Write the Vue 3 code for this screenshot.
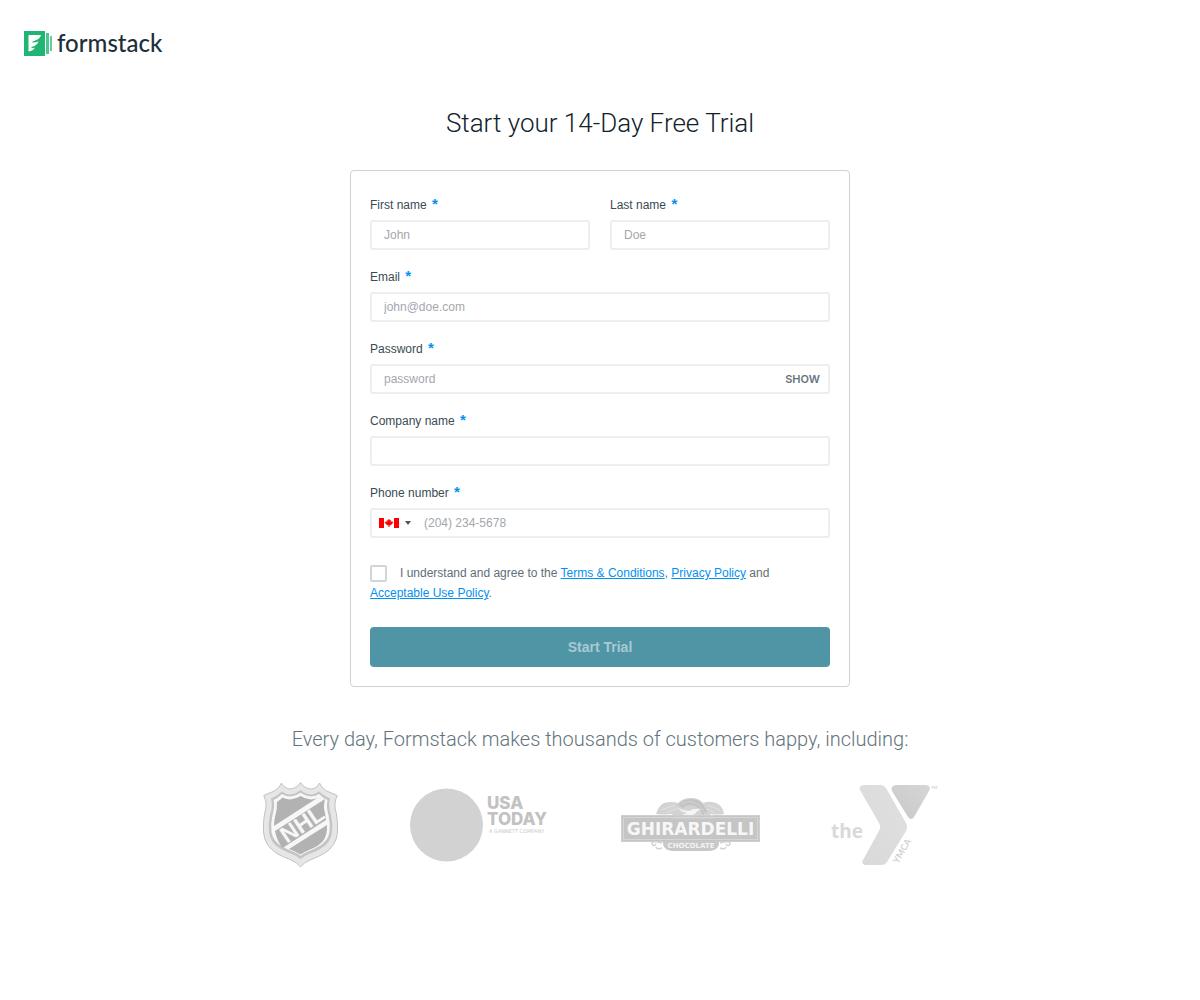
<template>
  <div class="page">
    <header class="header">
      <a href="#" class="brand" aria-label="formstack">
        <svg class="brand-mark" width="29" height="25" viewBox="0 0 29 25" aria-hidden="true">
          <rect x="0" y="0" width="21" height="25" fill="#21b573" />
          <path d="M4.500 4H17C16 7.500 13.500 9 8.500 10.500V11.500Q12 11.500 14.500 10.500C13.500 13.500 11 15 7.500 16V17Q9.500 17 11 16.500C10 19 7.500 20 4.500 20.500Z" fill="#fff" />
          <rect x="22" y="2" width="3" height="21" fill="#4fc690" />
          <rect x="26" y="5" width="2" height="15" fill="#63cc9c" />
        </svg>
        <span class="brand-name">formstack</span>
      </a>
    </header>

    <main>
      <h1>Start your 14-Day Free Trial</h1>

      <form class="card" @submit.prevent>
        <div class="row">
          <div v-for="field in nameFields" :key="field.id" class="field">
            <label :for="field.id">{{ field.label }} <span class="req">*</span></label>
            <input :id="field.id" v-model="form[field.id]" class="control" type="text" :placeholder="field.placeholder">
          </div>
        </div>

        <div class="field">
          <label for="email">Email <span class="req">*</span></label>
          <input id="email" v-model="form.email" class="control" type="email" placeholder="john@doe.com">
        </div>

        <div class="field">
          <label for="password">Password <span class="req">*</span></label>
          <div class="control group">
            <input id="password" v-model="form.password" :type="showPassword ? 'text' : 'password'" placeholder="password">
            <button type="button" class="show" @click="showPassword = !showPassword">{{ showPassword ? "HIDE" : "SHOW" }}</button>
          </div>
        </div>

        <div class="field">
          <label for="company">Company name <span class="req">*</span></label>
          <input id="company" v-model="form.company" class="control" type="text">
        </div>

        <div class="field">
          <label for="phone">Phone number <span class="req">*</span></label>
          <div class="control group">
            <div class="country">
              <svg width="20" height="10" viewBox="0 0 20 10" aria-hidden="true">
                <rect width="20" height="10" fill="#fff" />
                <path d="M0 0H5V10H0ZM15 0H20V10H15Z" fill="#f00" />
                <path d="M10 1L11 2.6L11.9 2.2L11.6 4.2L12.6 3.4L14 4L13.4 5.4L11.4 7.2H10.3V9H9.7V7.2H8.6L6.6 5.4L6 4L7.4 3.4L8.4 4.2L8.1 2.2L9 2.6Z" fill="#f00" stroke="#f00" stroke-width="0.300" />
              </svg>
              <span class="caret"></span>
              <select v-model="form.country" aria-label="Country">
                <option value="ca">Canada</option>
                <option value="us">United States</option>
              </select>
            </div>
            <input id="phone" v-model="form.phone" type="tel" placeholder="(204) 234-5678">
          </div>
        </div>

        <div class="terms">
          <input id="agree" v-model="form.agree" type="checkbox">
          <label for="agree">I understand and agree to the</label> <a href="#">Terms &amp; Conditions</a>, <a href="#">Privacy Policy</a> and <a href="#">Acceptable Use Policy</a>.
        </div>

        <button type="submit" class="submit" :disabled="!form.agree">Start Trial</button>
      </form>

      <h2>Every day, Formstack makes thousands of customers happy, including:</h2>

      <div class="customers">
        <svg width="75" height="86" viewBox="0 0 75 86" role="img" aria-label="NHL">
          <path d="M37.500 0.500Q34 6.500 27 7Q21 6.500 18.500 1Q15 8 9 10Q5 11.500 0.800 13.500Q5 22 1.500 32Q0 40 0.500 50Q1.500 64 14 71.500Q19 74.500 27 77.500Q34 80 37.500 85Q41 80 48 77.500Q56 74.500 61 71.500Q73.500 64 74.500 50Q75 40 73.500 32Q70 22 74.200 13.500Q70 11.500 66 10Q60 8 56.500 1Q54 6.500 48 7Q41 6.500 37.500 0.500Z" fill="#e6e6e6" stroke="#c2c2c2" stroke-width="1" />
          <path d="M37.500 8Q33 12 27 12.500Q22 12 19 9.500Q14 14 8 16.500Q10 24 7 33Q5 42 6 50Q7 61 18 67Q23 70 29 72Q34 74 37.500 77Q41 74 46 72Q52 70 57 67Q68 61 69 50Q70 42 68 33Q65 24 67 16.500Q61 14 56 9.500Q53 12 48 12.500Q42 12 37.500 8Z" fill="#c4c4c4" />
          <path d="M37.500 10.500Q33 14 27 14.500Q22 14 19 12Q15 16 10.500 18Q12 25 9.500 33Q7.500 42 8.500 50Q9.500 59 19.500 64.500Q24 67.500 30 69.500Q35 71.500 37.500 74Q40 71.500 45 69.500Q51 67.500 55.500 64.500Q65.500 59 66.500 50Q67.500 42 65.500 33Q63 25 64.500 18Q60 16 56 12Q53 14 48 14.500Q42 14 37.500 10.500Z" fill="#f7f7f7" />
          <path d="M37.500 14Q33 17 27 17.500Q22 17 19.500 15.500Q17 18 14 20Q14.500 27 12 35Q11 39 11 44L55 15.500Q53 17 48 17.500Q42 17 37.500 14Z" fill="#b2b2b2" />
          <path d="M12 49L62 17Q60 25 62 31L63 38L19.500 66Q13.500 58 12 49Z" fill="#b2b2b2" />
          <text x="39" y="50" class="nhl" transform="rotate(-34 39 42)" text-anchor="middle">NHL</text>
          <path d="M64 43L26 67Q32 69 37.500 72.500Q42 69.500 47 67.500Q56 64 60 59Q64.500 53 64 43Z" fill="#b2b2b2" />
        </svg>

        <svg width="139" height="74" viewBox="0 0 139 74" role="img" aria-label="USA Today">
          <circle cx="36.500" cy="37" r="36.500" fill="#d2d2d2" />
          <text x="77" y="21" class="usa">USA</text>
          <text x="77" y="37" class="usa">TODAY</text>
          <text x="79" y="45" class="gannett">A GANNETT COMPANY</text>
        </svg>

        <svg width="139" height="54" viewBox="0 0 139 54" role="img" aria-label="Ghirardelli Chocolate">
          <path d="M35 16Q37 8 43 5Q50 3 57 5Q62 0 70 0Q78 0 82 5Q90 2 97 6Q102 9 103 16Q96 17 90 16L84 20H58L50 16Q42 17 35 16Z" fill="#d3d3d3" />
          <path d="M57 7Q62 1 70 1Q81 1 86 14L82 17Q78 8 70 7Q64 7 62 10Z" fill="#c3c3c3" />
          <path d="M60 7Q70 -1 80 9Q83 12 84 16" fill="none" stroke="#d3d3d3" stroke-width="1" />
          <path d="M40 12L54 7M45 15L57 10M99 12L87 7M94 15L86 11" fill="none" stroke="#e2e2e2" stroke-width="1" />
          <path d="M57 10Q62 13 68 13Q73 10 81 11Q76 12 74 16Q68 19 61 17L66 15Q60 14 57 10Z" fill="#f5f5f5" />
          <rect x="0.500" y="17.500" width="138" height="26" fill="#c5c5c5" stroke="#cfcfcf" />
          <path d="M50 20Q56 15 69 18Q80 20 92 18V21H50Z" fill="#cbcbcb" />
          <rect x="2.500" y="19.500" width="134" height="22" fill="none" stroke="#d6d6d6" />
          <text x="69.500" y="37" class="ghirardelli" text-anchor="middle">GHIRARDELLI</text>
          <path d="M42 43H98Q99 52 89 53H51Q41 52 42 43Z" fill="#c8c8c8" />
          <text x="70" y="50" class="chocolate" text-anchor="middle">CHOCOLATE</text>
          <path d="M41 45Q30 42 31 46Q33 49 35 46M41 50Q36 52 35 49M99 45Q110 42 109 46Q107 49 105 46M99 50Q104 52 105 49" fill="none" stroke="#d3d3d3" stroke-width="1.500" />
        </svg>

        <svg width="105" height="82" viewBox="0 0 105 82" role="img" aria-label="the YMCA">
          <defs>
            <linearGradient id="y-left" x1="0" y1="1" x2="1" y2="0">
              <stop offset="0" stop-color="#d9d9d9" />
              <stop offset="1" stop-color="#e0e0e0" />
            </linearGradient>
            <linearGradient id="y-right" x1="0" y1="1" x2="1" y2="0">
              <stop offset="0" stop-color="#c8c8c8" />
              <stop offset="1" stop-color="#d6d6d6" />
            </linearGradient>
          </defs>
          <path d="M32 1H48Q52 1 54 4L74 39Q76 43 74 47L55 78Q53 81 49 81H33Q29 80 31 76L48 45Q49 42 47 39L28 6Q26 2 32 1Z" fill="url(#y-left)" />
          <path d="M64 1H94Q100 2 97 7L82 33Q79 37 76 33L60 7Q58 2 64 1Z" fill="url(#y-right)" />
          <text x="-1" y="54" class="the">the</text>
          <text x="66" y="80" class="ymca" transform="rotate(-60 66 80)">YMCA</text>
          <text x="99" y="5" class="tm">TM</text>
        </svg>
      </div>
    </main>
  </div>
</template>

<script setup>
import { reactive, ref } from "vue";

const nameFields = [
  { id: "firstName", label: "First name", placeholder: "John" },
  { id: "lastName", label: "Last name", placeholder: "Doe" }
];

const form = reactive({
  firstName: "",
  lastName: "",
  email: "",
  password: "",
  company: "",
  country: "ca",
  phone: "",
  agree: false
});

const showPassword = ref(false);
</script>

<style>
body {
  margin: 0;
  background: #fff;
}
</style>

<style scoped>
.page {
  font-family: "Liberation Sans", Arial, sans-serif;
  font-size: 12px;
  line-height: 20px;
  color: #3b4a54;
  padding-bottom: 40px;
}

.header {
  display: flex;
  padding: 28px 24px 0;
}

.brand {
  display: flex;
  align-items: center;
  gap: 4px;
  height: 30px;
  color: #1f2f38;
  text-decoration: none;
}

.brand-name {
  font-family: Lato, sans-serif;
  font-size: 24px;
  font-weight: 500;
  line-height: 30px;
}

main {
  display: flex;
  flex-direction: column;
  align-items: center;
  padding: 0 20px;
}

h1, h2 {
  margin: 0;
  font-family: Roboto, sans-serif;
  font-weight: 300;
  text-align: center;
}

h1 {
  padding: 45px 0 27px;
  font-size: 26px;
  line-height: 40px;
  color: #10222c;
}

h2 {
  padding: 37px 0 28px;
  font-size: 20px;
  line-height: 30px;
  color: #63747d;
}

.card {
  display: flex;
  flex-direction: column;
  gap: 17px;
  box-sizing: border-box;
  width: 100%;
  max-width: 500px;
  padding: 24px 19px 19px;
  border: 1px solid #cfd2d5;
  border-radius: 4px;
}

.row {
  display: grid;
  grid-template-columns: 1fr 1fr;
  gap: 20px;
}

.field label {
  display: block;
  margin-bottom: 5px;
}

.req {
  margin-left: 2px;
  font-size: 15px;
  font-weight: bold;
  line-height: 16px;
  color: #0391f0;
}

input, button {
  font-family: inherit;
}

.control {
  display: block;
  box-sizing: border-box;
  width: 100%;
  height: 30px;
  padding: 0 12px;
  border: 2px solid #eeeeee;
  border-radius: 3px;
  background: #fff;
  font-size: 12px;
  color: #3b4a54;
}

.control::placeholder, .group input::placeholder {
  color: #a3a7ad;
  opacity: 1;
}

.group {
  display: flex;
  align-items: center;
  padding: 0 8px 0 7px;
}

.group input {
  flex: 1;
  min-width: 0;
  padding: 0 5px;
  border: 0;
  outline: 0;
  background: none;
  font-size: 12px;
  color: inherit;
}

.show {
  padding: 0;
  border: 0;
  background: none;
  font-family: Inter, sans-serif;
  font-size: 11px;
  font-weight: 600;
  color: #66757e;
  cursor: pointer;
}

.country {
  position: relative;
  display: flex;
  align-items: center;
  gap: 6px;
  margin-right: 8px;
}

.country select {
  position: absolute;
  inset: 0;
  width: 100%;
  opacity: 0;
}

.caret {
  border: 3px solid transparent;
  border-top: 4px solid #555;
  border-bottom: 0;
}

.terms {
  margin-top: 8px;
  color: #5f6e77;
}

.terms input {
  appearance: none;
  box-sizing: border-box;
  width: 17px;
  height: 17px;
  margin: 0 13px 0 0;
  border: 2px solid #cfd5d9;
  border-radius: 2px;
  vertical-align: middle;
}

.terms input:checked {
  background: #5095a6;
}

.terms a {
  color: #0391f0;
  white-space: nowrap;
}

.submit {
  height: 40px;
  margin-top: 7px;
  border: 0;
  border-radius: 4px;
  background: #5095a6;
  font-size: 14px;
  font-weight: bold;
  color: #fff;
}

.submit:disabled {
  color: #a7cad3;
}

.customers {
  display: flex;
  flex-wrap: wrap;
  align-items: center;
  justify-content: center;
  gap: 20px 72px;
}

.customers svg {
  overflow: visible;
}

.customers text {
  font-family: Lato, sans-serif;
  font-weight: bold;
}

.customers .nhl {
  font-family: "Liberation Sans", sans-serif;
  font-size: 23px;
  fill: #f7f7f7;
}

.customers .usa {
  font-family: Inter, sans-serif;
  font-size: 17px;
  font-weight: 800;
  fill: #c2c2c2;
}

.customers .gannett {
  font-family: "DejaVu Sans", sans-serif;
  font-size: 5px;
  font-weight: normal;
  fill: #c8c8c8;
}

.customers .ghirardelli {
  font-family: "DejaVu Sans", sans-serif;
  font-size: 17px;
  fill: #f7f7f7;
}

.customers .chocolate {
  font-family: "DejaVu Sans", sans-serif;
  font-size: 7px;
  fill: #f2f2f2;
}

.customers .the {
  font-family: "Open Sans", sans-serif;
  font-size: 19px;
  fill: #d9d9d9;
}

.customers .ymca {
  font-size: 9px;
  fill: #d2d2d2;
}

.customers .tm {
  font-size: 4px;
  fill: #cfcfcf;
}
</style>
